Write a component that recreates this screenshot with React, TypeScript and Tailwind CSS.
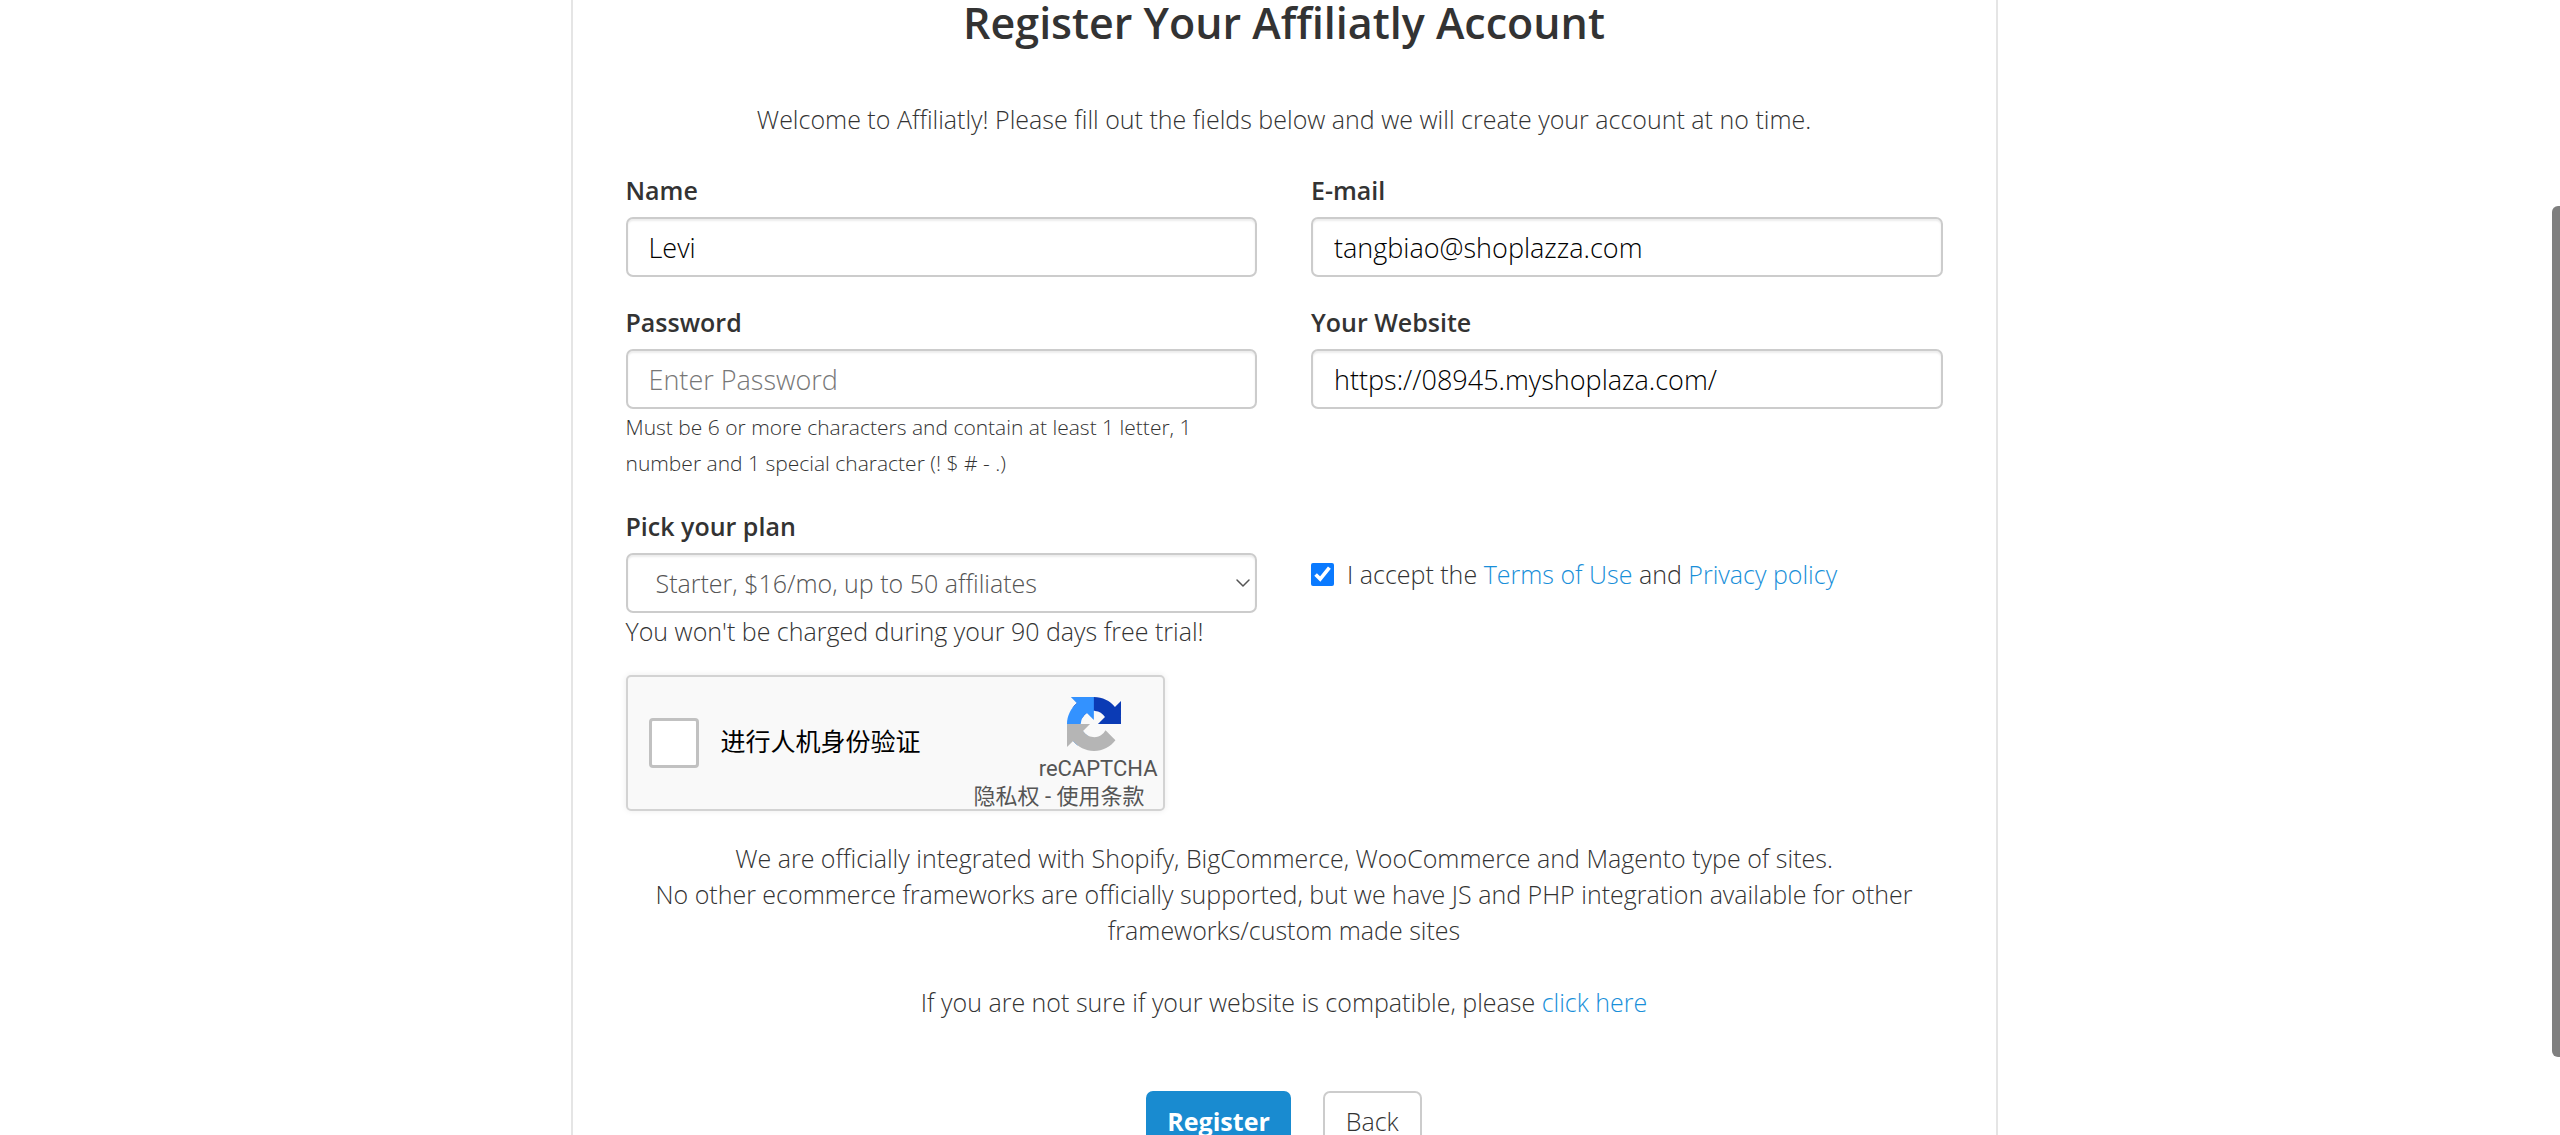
import { useState } from "react";
import { ChevronDown } from "lucide-react";

const control =
  "w-full h-[60px] rounded-[7px] border-2 border-[#ccc] bg-white px-[21px] text-[27px] font-light text-black outline-none shadow-[inset_0_2px_2px_rgba(0,0,0,0.08)] placeholder:text-[#777] focus:border-[#198bd0]";

const labelStyle = "block mb-[9px] font-semibold";
const linkStyle = "text-[#198fd9] hover:underline";

type FieldProps = {
  id: string;
  label: string;
  type?: string;
  placeholder?: string;
  defaultValue?: string;
};

function Field({ id, label, type = "text", placeholder, defaultValue }: FieldProps) {
  return (
    <div>
      <label htmlFor={id} className={labelStyle}>
        {label}
      </label>
      <input
        id={id}
        type={type}
        placeholder={placeholder}
        defaultValue={defaultValue}
        className={control}
      />
    </div>
  );
}

function RecaptchaLogo() {
  return (
    <svg viewBox="0 0 64 64" className="size-[54px] shrink-0 mr-[42px]" aria-hidden="true">
      <path
        fill="#0b3bb5"
        d="M64 31.955l-.033-1.37V4.687l-7.16 7.16C50.948 4.674 42.033.093 32.05.093c-10.4 0-19.622 4.96-25.458 12.64l11.736 11.86a15.55 15.55 0 0 1 4.754-5.334c2.05-1.6 4.952-2.906 8.968-2.906.485 0 .86.057 1.135.163 4.976.393 9.288 3.14 11.828 7.124l-8.307 8.307L64 31.953"
      />
      <path
        fill="#3392ff"
        d="M31.862.094l-1.37.033H4.594l7.16 7.16C4.58 13.147 0 22.06 0 32.046c0 10.4 4.96 19.622 12.64 25.458L24.5 45.768a15.55 15.55 0 0 1-5.334-4.754c-1.6-2.05-2.906-4.952-2.906-8.968 0-.485.057-.86.163-1.135.393-4.976 3.14-9.288 7.124-11.828l8.307 8.307L31.86.095"
      />
      <path
        fill="#b5b5b5"
        d="M.001 32.045l.033 1.37v25.898l7.16-7.16c5.86 7.173 14.774 11.754 24.76 11.754 10.4 0 19.622-4.96 25.458-12.64l-11.736-11.86a15.55 15.55 0 0 1-4.754 5.334c-2.05 1.6-4.952 2.906-8.968 2.906-.485 0-.86-.057-1.135-.163-4.976-.393-9.288-3.14-11.828-7.124l8.307-8.307c-10.522.04-22.4.066-27.295-.005"
      />
    </svg>
  );
}

function Recaptcha() {
  return (
    <div className="mt-[26px] flex h-[136px] w-full max-w-[539px] items-center justify-between rounded-[5px] border-2 border-[#d3d3d3] bg-[#f9f9f9] pl-[21px] shadow-[0_0_6px_rgba(0,0,0,0.08)] font-[Roboto,'Noto_Sans_CJK_SC',sans-serif]">
      <label className="flex items-center gap-[22px] font-normal text-black">
        <input
          type="checkbox"
          className="size-[50px] appearance-none rounded-[4px] border-[3px] border-[#c1c1c1] bg-white checked:bg-[#4285f4]"
        />
        进行人机身份验证
      </label>
      <div className="flex h-full flex-col items-end pt-5 text-[22px] leading-[28px] font-normal text-[#555]">
        <RecaptchaLogo />
        <span className="mt-1 mr-[5px]">reCAPTCHA</span>
        <span className="mr-[18px]">
          <a href="#privacy">隐私权</a> - <a href="#terms">使用条款</a>
        </span>
      </div>
    </div>
  );
}

export default function App() {
  const [accepted, setAccepted] = useState(true);

  return (
    <div className="h-screen overflow-hidden bg-white pl-2 font-['Open_Sans','Noto_Sans_CJK_SC',sans-serif] text-[25px] leading-[36px] font-light text-[#333]">
      <main className="mx-auto min-h-full w-full max-w-[1427px] border-x-2 border-[#e5e5e5] px-[53px] pb-20">
        <h1 className="text-center text-[43px] leading-[46px] font-semibold">
          Register Your Affiliatly Account
        </h1>
        <p className="mt-[55px] text-center">
          Welcome to Affiliatly! Please fill out the fields below and we will create your account at
          no time.
        </p>

        <form className="mt-[35px]" onSubmit={(e) => e.preventDefault()}>
          <div className="grid grid-cols-2 gap-x-[54px] gap-y-[27px]">
            <Field id="name" label="Name" defaultValue="Levi" />
            <Field id="email" label="E-mail" type="email" defaultValue="tangbiao@shoplazza.com" />
            <div>
              <Field id="password" label="Password" type="password" placeholder="Enter Password" />
              <p className="text-[21px]">
                Must be 6 or more characters and contain at least 1 letter, 1 <br />
                number and 1 special character (! $ # - .)
              </p>
            </div>
            <Field id="website" label="Your Website" defaultValue="https://08945.myshoplaza.com/" />

            <div>
              <label htmlFor="plan" className={labelStyle}>
                Pick your plan
              </label>
              <div className="relative">
                <select
                  id="plan"
                  className="h-[60px] w-full appearance-none rounded-[7px] border-2 border-[#ccc] bg-white px-7 text-[25px] font-light text-[#555] outline-none shadow-[inset_0_2px_2px_rgba(0,0,0,0.08)]"
                >
                  <option>Starter, $16/mo, up to 50 affiliates</option>
                </select>
                <ChevronDown
                  className="pointer-events-none absolute top-[18px] right-[2px] size-6 text-[#555]"
                  strokeWidth={1.5}
                />
              </div>
              <p>You won't be charged during your 90 days free trial!</p>
            </div>

            {/* Terms */}
            <div className="flex items-start gap-[13px] pt-12">
              <input
                id="terms"
                type="checkbox"
                checked={accepted}
                onChange={(e) => setAccepted(e.target.checked)}
                className="mt-[7px] size-[23px] accent-[#0a7aff]"
              />
              <label htmlFor="terms">
                I accept the{" "}
                <a href="#terms" className={linkStyle}>
                  Terms of Use
                </a>{" "}
                and{" "}
                <a href="#privacy" className={linkStyle}>
                  Privacy policy
                </a>
              </label>
            </div>
          </div>

          <Recaptcha />

          <div className="mt-[29px] text-center">
            <p>We are officially integrated with Shopify, BigCommerce, WooCommerce and Magento type of sites.</p>
            <p>
              No other ecommerce frameworks are officially supported, but we have JS and PHP
              integration available for other frameworks/custom made sites
            </p>
            <p className="mt-9">
              If you are not sure if your website is compatible, please{" "}
              <a href="#compatibility" className={linkStyle}>
                click here
              </a>
            </p>
          </div>

          {/* Actions */}
          <div className="mt-[71px] flex justify-center gap-8">
            <button
              type="submit"
              className="h-[60px] rounded-[7px] bg-[#198bd0] px-[21px] font-bold text-white"
            >
              Register
            </button>
            <button
              type="button"
              className="h-[60px] rounded-[7px] border-2 border-[#ccc] bg-white px-[21px] font-light text-[#333]"
            >
              Back
            </button>
          </div>
        </form>
      </main>

      {/* Scrollbar thumb */}
      <div className="fixed top-[206px] right-0 h-[851px] w-2 rounded-l-[6px] bg-[#7f7f7f]" />
    </div>
  );
}
